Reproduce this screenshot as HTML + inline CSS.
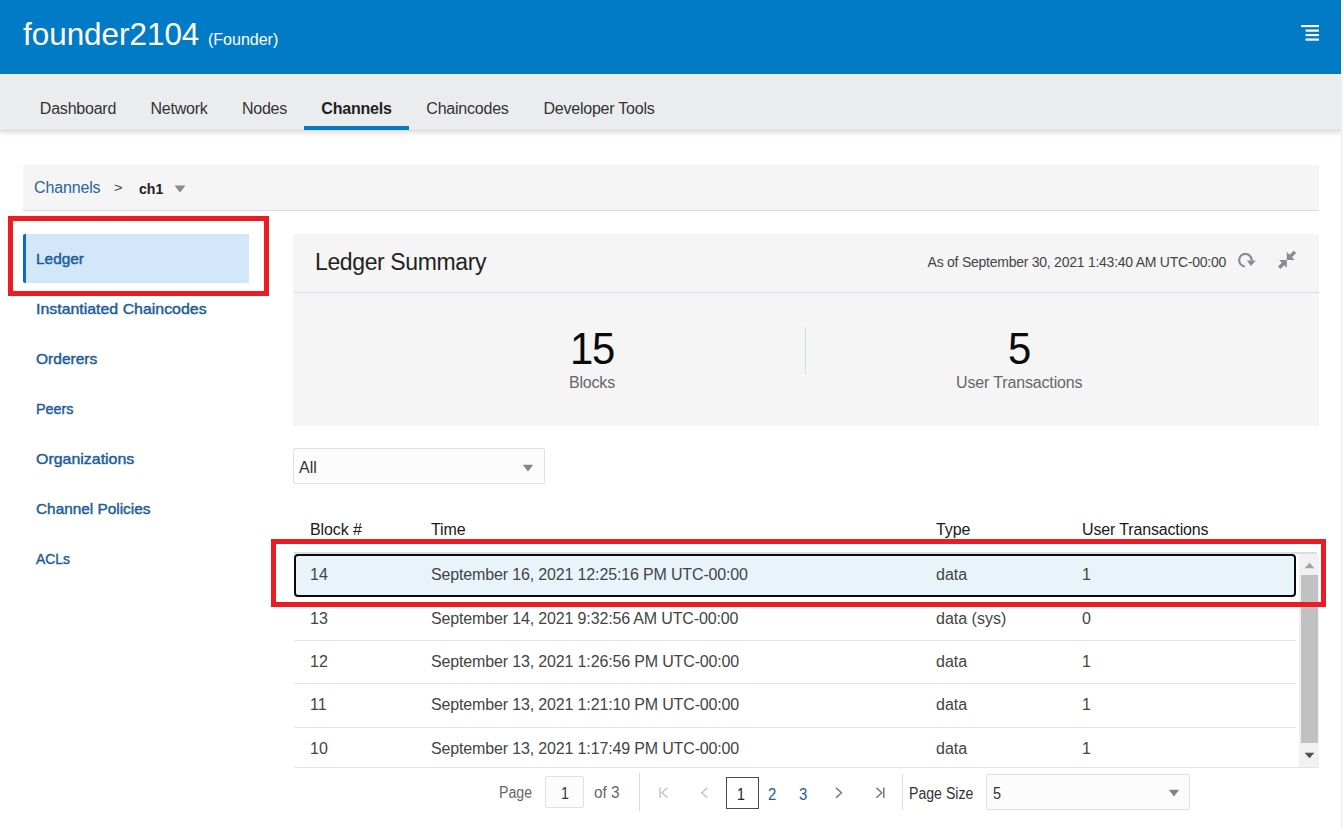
<!DOCTYPE html>
<html lang="en">
<head>
<meta charset="utf-8">
<title>founder2104 - Channels</title>
<style>
*{box-sizing:border-box;margin:0;padding:0}
html,body{width:1343px;height:829px;overflow:hidden;background:#fff}
body{position:relative;font-family:"Liberation Sans",Arial,Helvetica,sans-serif;color:#333;font-size:16px}
.abs{position:absolute;white-space:nowrap}
.t{position:absolute;white-space:nowrap;line-height:20px;transform-origin:0 50%}
#hdr{left:0;top:0;width:1341px;height:74px;background:#027bc7}
#title{left:23px;top:16px;color:#fff;font-size:31.4px;line-height:37px}
#role{left:208px;top:30px;color:#fff;font-size:16px;line-height:20px}
#nav{left:0;top:74px;width:1341px;height:57px;background:#ebecee;border-bottom:1px solid #d5dde3;box-shadow:0 2px 5px rgba(0,0,0,.13)}
#rline{left:1341px;top:131px;width:1px;height:698px;background:#e9e9e9}
.tab{top:74px;height:56px;line-height:70px;font-size:16px;color:#333;text-align:center;letter-spacing:-.22px}
.tab.sel{font-weight:bold;color:#1f1f1f;border-bottom:4px solid #027bc7}
#bc{left:23px;top:165px;width:1296px;height:46px;background:#f5f5f5;border-bottom:1px solid #d5dde3}
.red{border:5px solid #ec1c24;background:transparent}
.side{left:36px;font-size:15px;color:#1d5d98;-webkit-text-stroke:.45px #1d5d98}
#ledger{left:23px;top:234px;width:226px;height:49px;background:#d2e7fa;border-left:3px solid #0a6bcf;border-radius:2px 0 0 2px}
#panel{left:293px;top:234px;width:1026px;height:192px;background:#f5f5f5}
#pline{left:293px;top:292px;width:1026px;height:1px;background:#d6dfe6}
.sel-box{background:#fcfcfd;border:1px solid #dfe2e5;border-radius:2px}
.th{top:520.4px;font-size:16px;color:#1a1a1a;letter-spacing:-.1px}
.td{font-size:16px;color:#444}
.rl{left:294px;width:1002px;height:1px;background:#e2e4e6}
.pg{font-size:16px;color:#666;line-height:20px}
</style>
</head>
<body>
<div id="hdr" class="abs"></div>
<div id="title" class="abs">founder2104</div>
<div id="role" class="abs">(Founder)</div>
<svg class="abs" style="left:1298px;top:22px" width="24" height="22" viewBox="0 0 24 22"><g fill="#fff"><rect x="3" y="3" width="18" height="2.1"/><rect x="7.6" y="7.5" width="13.4" height="2.2"/><rect x="7.6" y="12" width="13.4" height="2.1"/><rect x="7.6" y="16.5" width="13.4" height="2.2"/></g></svg>

<div id="nav" class="abs"></div>
<div class="abs tab" style="left:23px;width:110px">Dashboard</div>
<div class="abs tab" style="left:133px;width:92px">Network</div>
<div class="abs tab" style="left:225px;width:79px">Nodes</div>
<div class="abs tab sel" style="left:304px;width:105px">Channels</div>
<div class="abs tab" style="left:409px;width:117px">Chaincodes</div>
<div class="abs tab" style="left:526px;width:146px">Developer Tools</div>
<div id="rline" class="abs"></div>

<div id="bc" class="abs"></div>
<div class="t" style="left:34px;top:178px;font-size:16px;color:#2a639d;letter-spacing:-.15px">Channels</div>
<div class="t" style="left:114px;top:178px;font-size:13px;color:#444;transform:scaleX(1.12)">&gt;</div>
<div class="t" style="left:139px;top:179px;font-size:15px;font-weight:bold;color:#222;transform:scaleX(.94)">ch1</div>
<svg class="abs" style="left:174px;top:184.7px" width="12" height="8" viewBox="0 0 12 8"><path d="M0.5 0.5h11L6 7.5z" fill="#8a8a8a"/></svg>

<!-- side nav -->
<div id="ledger" class="abs"></div>
<div class="t side" style="top:249px;transform:scaleX(1.027)">Ledger</div>
<div class="t side" style="top:299px;transform:scaleX(1.06)">Instantiated Chaincodes</div>
<div class="t side" style="top:349px;transform:scaleX(1.036)">Orderers</div>
<div class="t side" style="top:399px;transform:scaleX(0.957)">Peers</div>
<div class="t side" style="top:449px;transform:scaleX(1.062)">Organizations</div>
<div class="t side" style="top:499px;transform:scaleX(1.024)">Channel Policies</div>
<div class="t side" style="top:549px;transform:scaleX(0.927)">ACLs</div>
<div class="abs red" style="left:8px;top:216px;width:261px;height:80px"></div>

<!-- summary panel -->
<div id="panel" class="abs"></div>
<div id="pline" class="abs"></div>
<div class="t" style="left:315px;top:249px;font-size:23px;line-height:26px;color:#222;letter-spacing:-.38px">Ledger Summary</div>
<div class="t" style="left:927.6px;top:252px;font-size:14px;color:#444;letter-spacing:-.25px">As of September 30, 2021 1:43:40 AM UTC-00:00</div>
<svg class="abs" style="left:1236px;top:250px" width="22" height="20" viewBox="1236 250 22 20"><path d="M1245 266.5A6.3 6.3 0 1 1 1251.75 260.4" fill="none" stroke="#868c92" stroke-width="2.2"/><path d="M1246.8 260.6h9l-4.9 5.4z" fill="#868c92"/></svg>
<svg class="abs" style="left:1276px;top:249px" width="22" height="22" viewBox="1276 249 22 22"><g fill="#868c92"><path d="M1286.8 260V252L1289.63 254.83 1293.83 250.63 1296.17 252.97 1291.97 257.17 1294.8 260z"/><path d="M1286.8 260.1H1279.2L1281.8 262.75 1278 266.6 1280.4 269 1284.2 265.15 1286.8 267.8z"/></g></svg>

<div class="t" style="left:570px;top:326.4px;font-size:45px;line-height:46px;color:#0a0a0a;letter-spacing:-1.5px;transform:scaleX(.93)">15</div>
<div class="t" style="left:569px;top:373px;font-size:16px;color:#666;letter-spacing:-.2px">Blocks</div>
<div class="abs" style="left:805px;top:327px;width:1px;height:47px;background:#d6dfe6"></div>
<div class="t" style="left:1008px;top:326.4px;font-size:45px;line-height:46px;color:#0a0a0a;transform:scaleX(.93)">5</div>
<div class="t" style="left:956px;top:373px;font-size:16px;color:#666;letter-spacing:-.15px">User Transactions</div>

<!-- filter -->
<div class="abs sel-box" style="left:293px;top:448px;width:252px;height:36px"></div>
<div class="t" style="left:299px;top:458px;font-size:16px;color:#333">All</div>
<svg class="abs" style="left:522px;top:463.6px" width="12" height="8" viewBox="0 0 12 8"><path d="M0.8 0.8h10.4L6 7.4z" fill="#858585"/></svg>

<!-- table -->
<div class="t th" style="left:310px">Block #</div>
<div class="t th" style="left:431px">Time</div>
<div class="t th" style="left:936px">Type</div>
<div class="t th" style="left:1082px;letter-spacing:-.15px">User Transactions</div>

<div class="abs" style="left:294px;top:552px;width:1023px;height:2px;background:#d6dfe6"></div>
<div class="abs" style="left:294px;top:554px;width:1002px;height:43px;background:#e8f3fa;border:2px solid #0a0a0a;border-radius:4px"></div>
<div class="rl abs" style="top:640px"></div>
<div class="rl abs" style="top:683px"></div>
<div class="rl abs" style="top:727px"></div>
<div class="abs" style="left:294px;top:767px;width:1025px;height:1px;background:#e2e4e6"></div>

<div class="t td" style="left:310px;top:565px">14</div>
<div class="t td" style="left:431px;top:565px;letter-spacing:-.15px">September 16, 2021 12:25:16 PM UTC-00:00</div>
<div class="t td" style="left:936px;top:565px">data</div>
<div class="t td" style="left:1082px;top:565px">1</div>

<div class="t td" style="left:310px;top:609px">13</div>
<div class="t td" style="left:431px;top:609px;letter-spacing:-.15px">September 14, 2021 9:32:56 AM UTC-00:00</div>
<div class="t td" style="left:936px;top:609px">data (sys)</div>
<div class="t td" style="left:1082px;top:609px">0</div>

<div class="t td" style="left:310px;top:652px">12</div>
<div class="t td" style="left:431px;top:652px;letter-spacing:-.15px">September 13, 2021 1:26:56 PM UTC-00:00</div>
<div class="t td" style="left:936px;top:652px">data</div>
<div class="t td" style="left:1082px;top:652px">1</div>

<div class="t td" style="left:310px;top:695px">11</div>
<div class="t td" style="left:431px;top:695px;letter-spacing:-.15px">September 13, 2021 1:21:10 PM UTC-00:00</div>
<div class="t td" style="left:936px;top:695px">data</div>
<div class="t td" style="left:1082px;top:695px">1</div>

<div class="t td" style="left:310px;top:739px">10</div>
<div class="t td" style="left:431px;top:739px;letter-spacing:-.15px">September 13, 2021 1:17:49 PM UTC-00:00</div>
<div class="t td" style="left:936px;top:739px">data</div>
<div class="t td" style="left:1082px;top:739px">1</div>

<!-- scrollbar -->
<div class="abs" style="left:1299px;top:554px;width:20px;height:213px;background:#f1f1f1"></div>
<div class="abs" style="left:1301px;top:575px;width:17px;height:168px;background:#c1c1c1"></div>
<svg class="abs" style="left:1304px;top:562px" width="11" height="7" viewBox="0 0 11 7"><path d="M0.6 6.2h9.8L5.5 0.8z" fill="#a3a3a3"/></svg>
<svg class="abs" style="left:1304px;top:752px" width="11" height="7" viewBox="0 0 11 7"><path d="M0.6 0.8h9.8L5.5 6.2z" fill="#505050"/></svg>

<div class="abs red" style="left:271px;top:539px;width:1055px;height:68px"></div>

<!-- pagination -->
<div class="t pg" style="left:499px;top:783px;transform:scaleX(.885)">Page</div>
<div class="abs sel-box" style="left:545px;top:776px;width:39px;height:32px"></div>
<div class="t pg" style="left:561px;top:784px;color:#333;transform:scaleX(.885)">1</div>
<div class="t pg" style="left:594px;top:783px;transform:scaleX(.96)">of 3</div>
<div class="abs" style="left:639px;top:773px;width:1px;height:38px;background:#d6dfe6"></div>
<svg class="abs" style="left:656px;top:784px" width="16" height="17" viewBox="0 0 16 17"><path d="M4 3.5v10.4M11.4 3.7L6 8.7l5.4 5" fill="none" stroke="#c2c6ca" stroke-width="1.5"/></svg>
<svg class="abs" style="left:697px;top:784px" width="16" height="17" viewBox="0 0 16 17"><path d="M10.2 3.7L4.8 8.7l5.4 5" fill="none" stroke="#c2c6ca" stroke-width="1.5"/></svg>
<div class="abs" style="left:726px;top:777px;width:33px;height:32px;border:1px solid #4a4a4a"></div>
<div class="t pg" style="left:737px;top:785px;color:#222;transform:scaleX(.885)">1</div>
<div class="t pg" style="left:768px;top:785px;color:#1d5d98;transform:scaleX(.93)">2</div>
<div class="t pg" style="left:799px;top:785px;color:#1d5d98;transform:scaleX(.93)">3</div>
<svg class="abs" style="left:831px;top:784px" width="16" height="17" viewBox="0 0 16 17"><path d="M5 3.7l5.4 5-5.4 5" fill="none" stroke="#777" stroke-width="1.5"/></svg>
<svg class="abs" style="left:872px;top:784px" width="16" height="17" viewBox="0 0 16 17"><path d="M11.8 3.5v10.4M4.4 3.7l5.4 5-5.4 5" fill="none" stroke="#777" stroke-width="1.5"/></svg>
<div class="abs" style="left:902px;top:774px;width:1px;height:36px;background:#d6dfe6"></div>
<div class="t pg" style="left:909px;top:784px;color:#333;transform:scaleX(.882)">Page Size</div>
<div class="abs sel-box" style="left:986px;top:774px;width:204px;height:36px"></div>
<div class="t pg" style="left:993px;top:784px;color:#333;transform:scaleX(.9)">5</div>
<svg class="abs" style="left:1168px;top:789px" width="12" height="8" viewBox="0 0 12 8"><path d="M0.8 0.8h10.4L6 7.4z" fill="#858585"/></svg>
</body>
</html>
